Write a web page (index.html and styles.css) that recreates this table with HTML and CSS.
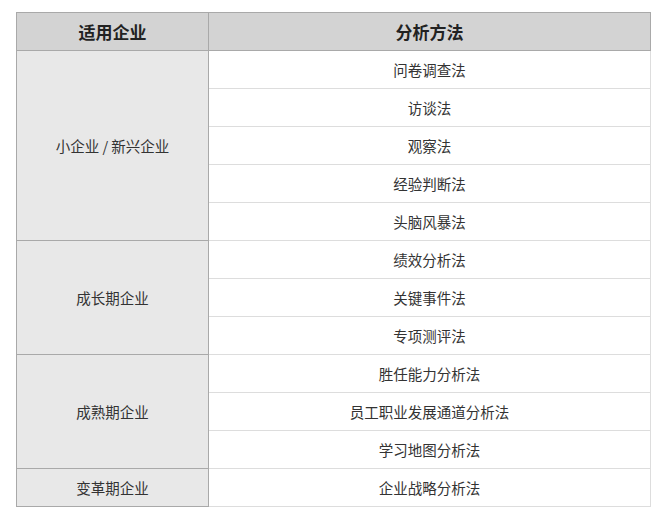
FILE: index.html
```html
<!DOCTYPE html>
<html lang="zh-CN">
<head>
<meta charset="utf-8">
<link rel="stylesheet" href="styles.css">
</head>
<body>
<table class="methods">
  <colgroup><col class="col-org"><col class="col-method"></colgroup>
  <thead>
    <tr><th>适用企业</th><th>分析方法</th></tr>
  </thead>
  <tbody>
    <tr><td class="org" rowspan="5">小企业 / 新兴企业</td><td>问卷调查法</td></tr>
    <tr><td>访谈法</td></tr>
    <tr><td>观察法</td></tr>
    <tr><td>经验判断法</td></tr>
    <tr><td>头脑风暴法</td></tr>
    <tr><td class="org" rowspan="3">成长期企业</td><td>绩效分析法</td></tr>
    <tr><td>关键事件法</td></tr>
    <tr><td>专项测评法</td></tr>
    <tr><td class="org" rowspan="3">成熟期企业</td><td>胜任能力分析法</td></tr>
    <tr><td>员工职业发展通道分析法</td></tr>
    <tr><td>学习地图分析法</td></tr>
    <tr><td class="org">变革期企业</td><td>企业战略分析法</td></tr>
  </tbody>
</table>
</body>
</html>
```
FILE: styles.css
```css
html, body {
  margin: 0;
  padding: 0;
  background: #ffffff;
}
body {
  font-family: "Noto Sans CJK SC", "Noto Sans", sans-serif;
  color: #333333;
}
.methods {
  border-collapse: collapse;
  margin: 12px 0 0 16px;
  width: 635px;
  table-layout: fixed;
}
.col-org { width: 192px; }
.methods th {
  background: #d3d3d3;
  border: 1px solid #a9a9a9;
  height: 37px;
  padding: 0;
  font-size: 17px;
  font-weight: bold;
  color: #222222;
  text-align: center;
  vertical-align: middle;
}
.methods td {
  border: 1px solid #dddddd;
  height: 37px;
  padding: 0;
  font-size: 14.5px;
  text-align: center;
  vertical-align: middle;
}
.methods td.org {
  background: #e8e8e8;
  border: 1px solid #a9a9a9;
}
```
